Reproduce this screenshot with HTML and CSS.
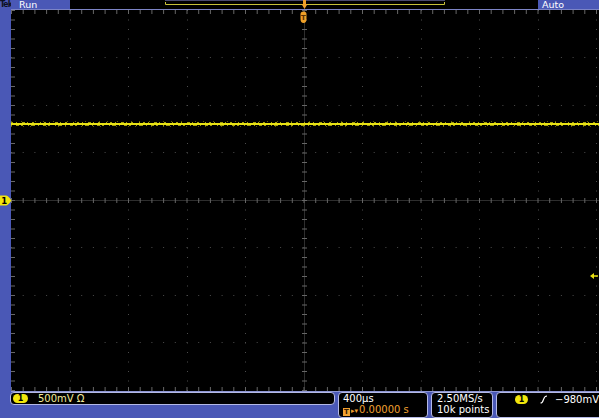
FILE: index.html
```html
<!DOCTYPE html>
<html>
<head>
<meta charset="utf-8">
<link rel="stylesheet" href="styles.css">
</head>
<body>
<div class="scope">
  <div class="topbar">
    <div class="status"><span class="tek">Tek</span><span class="run">Run</span></div>
    <div class="record">
      <svg width="468" height="9" viewBox="0 0 468 9">
        <line x1="95" y1="0.5" x2="375" y2="0.5" stroke="#4a4a70" stroke-width="1"/>
        <path d="M95.5 2 V4.5 H374.5 V2" fill="none" stroke="#c9c23a" stroke-width="1"/>
        <path d="M233 0 H236 V4 H237.5 L234.5 9 L231.5 4 H233 Z" fill="#f0a02a"/>
      </svg>
    </div>
    <div class="auto">Auto</div>
  </div>
  <div class="main">
    <div class="leftstrip">
      <svg class="ch-marker" width="12" height="11" viewBox="0 0 12 11">
        <path d="M0 0.5 H6 Q8 0.5 11.5 5.5 Q8 10.5 6 10.5 H0 Z" fill="#f2e60c"/>
        <text x="4.2" y="8.6" font-size="8.5" font-weight="bold" font-family="DejaVu Sans, sans-serif" fill="#000" text-anchor="middle">1</text>
      </svg>
    </div>
    <div class="screen">
      <svg width="588" height="381" viewBox="0 0 588 381">
        <g stroke="#4c4c4c" stroke-width="1" stroke-dasharray="1 8.5">
          <line x1="59.5" y1="0" x2="59.5" y2="381"/>
          <line x1="117.5" y1="0" x2="117.5" y2="381"/>
          <line x1="176.5" y1="0" x2="176.5" y2="381"/>
          <line x1="234.5" y1="0" x2="234.5" y2="381"/>
          <line x1="351.5" y1="0" x2="351.5" y2="381"/>
          <line x1="410.5" y1="0" x2="410.5" y2="381"/>
          <line x1="468.5" y1="0" x2="468.5" y2="381"/>
          <line x1="527.5" y1="0" x2="527.5" y2="381"/>
          <line x1="585.5" y1="0" x2="585.5" y2="381"/>
        </g>
        <g stroke="#4c4c4c" stroke-width="1" stroke-dasharray="1 10.7">
          <line x1="0" y1="47.5" x2="588" y2="47.5"/>
          <line x1="0" y1="95.5" x2="588" y2="95.5"/>
          <line x1="0" y1="142.5" x2="588" y2="142.5"/>
          <line x1="0" y1="237.5" x2="588" y2="237.5"/>
          <line x1="0" y1="285.5" x2="588" y2="285.5"/>
          <line x1="0" y1="332.5" x2="588" y2="332.5"/>
        </g>
        <g stroke="#2e2e2e" stroke-width="1">
          <line x1="293.5" y1="0" x2="293.5" y2="381"/>
          <line x1="0" y1="190.5" x2="588" y2="190.5"/>
        </g>
        <g stroke="#666">
          <line x1="293.5" y1="0" x2="293.5" y2="381" stroke-width="5" stroke-dasharray="1 8.5"/>
          <line x1="0" y1="190.5" x2="588" y2="190.5" stroke-width="5" stroke-dasharray="1 10.7"/>
          <line x1="0" y1="2" x2="588" y2="2" stroke-width="4" stroke-dasharray="1 10.7"/>
          <line x1="0" y1="379" x2="588" y2="379" stroke-width="4" stroke-dasharray="1 10.7"/>
          <line x1="2" y1="0" x2="2" y2="381" stroke-width="4" stroke-dasharray="1 8.5"/>
        </g>
        <g class="trace">
          <line x1="0" y1="114" x2="588" y2="114" stroke="#e8e214" stroke-width="2"/>
          <line x1="0" y1="112.5" x2="588" y2="112.5" stroke="#d6d012" stroke-width="1" stroke-dasharray="2 3 1 5 3 2 1 4 2 6 1 3" opacity="0.75"/>
          <line x1="0" y1="115.5" x2="588" y2="115.5" stroke="#d6d012" stroke-width="1" stroke-dasharray="1 4 3 2 2 5 1 2 4 3" opacity="0.75"/>
          <line x1="0" y1="111.5" x2="588" y2="111.5" stroke="#bdb810" stroke-width="1" stroke-dasharray="1 9 1 13 1 7" opacity="0.5"/>
          <line x1="0" y1="116.5" x2="588" y2="116.5" stroke="#bdb810" stroke-width="1" stroke-dasharray="1 11 1 6 1 15" opacity="0.5"/>
        </g>
        <path d="M289.5 4 Q289.5 1.5 292.5 1.5 Q295.5 1.5 295.5 4 V9 Q295.5 13 292.5 13 Q289.5 13 289.5 9 Z" fill="#eea028"/>
        <text x="292.5" y="10" font-size="7" font-weight="bold" font-family="DejaVu Sans, sans-serif" fill="#5a3000" text-anchor="middle">T</text>
        <path d="M579 266 L583 263 V265.3 H587 V266.7 H583 V269 Z" fill="#e8e010"/>
      </svg>
    </div>
  </div>
  <div class="bottom">
    <div class="box box-ch">
      <span class="pill">1</span>
      <span class="ch-text">500mV Ω</span>
    </div>
    <div class="box box-time">
      <div class="line white">400µs</div>
      <div class="line orange"><span class="tbox">T</span><span class="arrows">▸▾</span>0.00000 s</div>
    </div>
    <div class="box box-rate">
      <div class="line white">2.50MS/s</div>
      <div class="line white">10k points</div>
    </div>
    <div class="box box-trig">
      <span class="pill">1</span>
      <svg class="edge" width="8" height="9" viewBox="0 0 8 9">
        <path d="M0.5 8 Q2.5 8 3.5 4.5 Q4.5 1 7 1" fill="none" stroke="#fff" stroke-width="1.1"/>
      </svg>
      <span class="trig-text">−980mV</span>
    </div>
  </div>
</div>
</body>
</html>
```
FILE: styles.css
```css
html, body {
  margin: 0;
  padding: 0;
}
body {
  width: 599px;
  height: 418px;
  overflow: hidden;
  background: #4a58b6;
  font-family: "DejaVu Sans", "Liberation Sans", sans-serif;
}
.scope {
  display: flex;
  flex-direction: column;
  width: 599px;
  height: 418px;
  overflow: hidden;
}
.topbar {
  display: flex;
  height: 9px;
}
.status {
  width: 70px;
  display: flex;
  align-items: center;
  height: 9px;
  overflow: hidden;
  flex-shrink: 0;
}
.tek {
  display: inline-block;
  width: 11px;
  font-family: "DejaVu Sans Condensed", "DejaVu Sans", sans-serif;
  font-size: 8.5px;
  line-height: 9px;
  font-weight: bold;
  color: #0c1024;
  letter-spacing: -0.8px;
  white-space: nowrap;
  overflow: hidden;
}
.run {
  margin-left: 8px;
  color: #fff;
  font-size: 9.5px;
  line-height: 9px;
}
.record {
  width: 468px;
  height: 9px;
  background: #000;
  flex-shrink: 0;
}
.record svg {
  display: block;
}
.auto {
  flex: 1;
  color: #fff;
  font-size: 9.5px;
  line-height: 9px;
  padding-left: 4px;
}
.main {
  display: flex;
  height: 383px;
}
.leftstrip {
  width: 11px;
  position: relative;
  flex-shrink: 0;
}
.ch-marker {
  position: absolute;
  left: 0;
  top: 186px;
}
.screen {
  flex: 1;
  background: #000;
  border-top: 1px solid #7c84c6;
  border-bottom: 1px solid #8c94d2;
}
.screen svg {
  display: block;
}
.bottom {
  display: flex;
  height: 26px;
  align-items: flex-start;
}
.box {
  flex-shrink: 0;
  background: #000;
  border: 1px solid #b4b9e6;
  border-radius: 4px;
  box-sizing: border-box;
  font-size: 10px;
  line-height: 11px;
}
.box-ch {
  margin-left: 10px;
  width: 325px;
  height: 13px;
  display: flex;
  align-items: center;
  padding-left: 2px;
}
.pill {
  display: inline-block;
  width: 15px;
  height: 9px;
  border-radius: 5px;
  background: #f2e60c;
  color: #000;
  font-size: 8px;
  line-height: 9px;
  font-weight: bold;
  text-align: center;
}
.ch-text {
  margin-left: 10px;
  color: #f3ea9c;
}
.box-time {
  margin-left: 3px;
  width: 90px;
  height: 26px;
  padding: 0 0 0 4px;
}
.box-rate {
  margin-left: 3px;
  width: 62px;
  height: 26px;
  padding-left: 5px;
}
.box-trig {
  margin-left: 3px;
  width: 110px;
  height: 26px;
  display: flex;
  align-items: flex-start;
  padding: 2px 0 0 18px;
}
.box-trig .pill {
  width: 13px;
}
.edge {
  margin-left: 12px;
}
.trig-text {
  margin-left: 7px;
  color: #fff;
  line-height: 9px;
}
.line {
  height: 11px;
  white-space: nowrap;
}
.white {
  color: #fff;
}
.orange {
  color: #f0a030;
}
.tbox {
  display: inline-block;
  width: 7px;
  height: 8px;
  background: #f0a030;
  color: #3a1c00;
  font-size: 7px;
  line-height: 8px;
  font-weight: bold;
  text-align: center;
  vertical-align: -1px;
}
.arrows {
  font-size: 7px;
  margin: 0 1px;
}
```
